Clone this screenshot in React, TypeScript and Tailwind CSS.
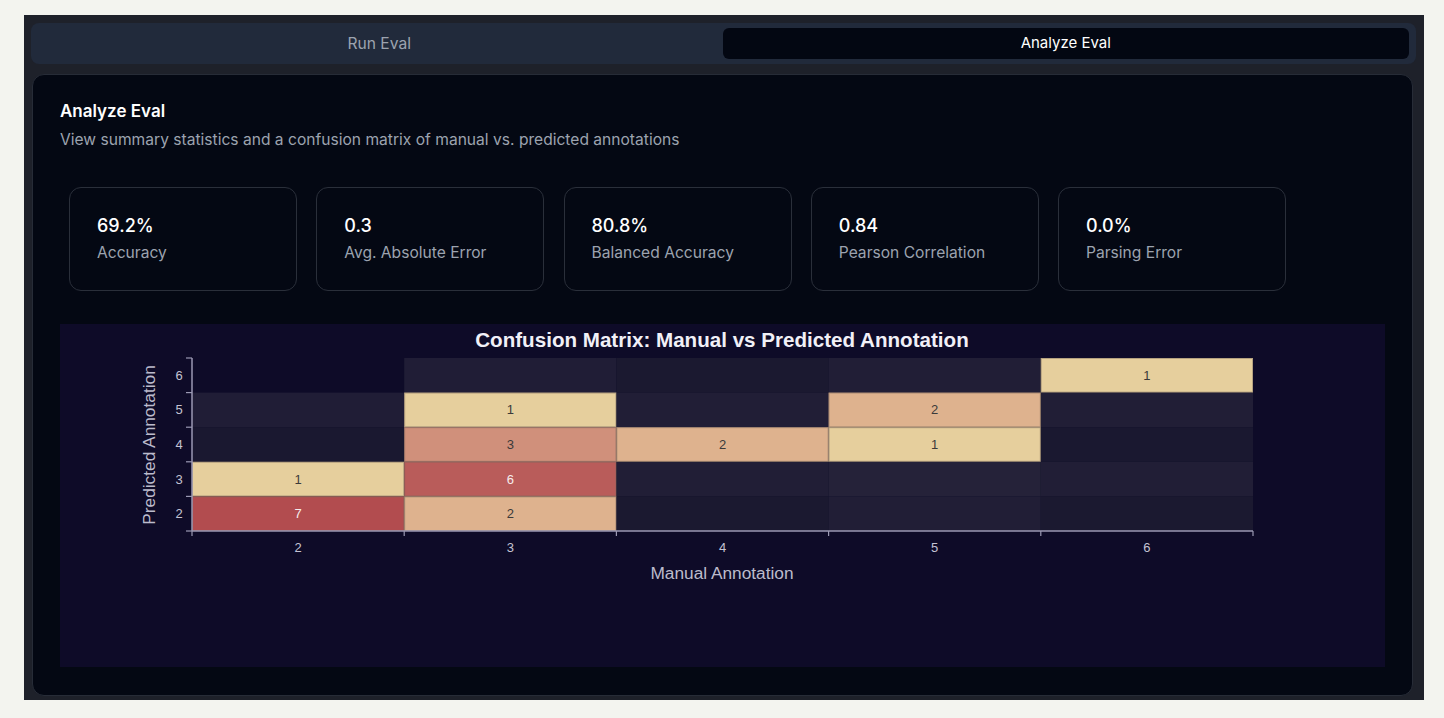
import React from "react";

type Cell = { fill: string; value?: number; light?: boolean; border?: boolean };

const COLS = [2, 3, 4, 5, 6];
const ROWS = [6, 5, 4, 3, 2];

// grid[rowIndex][colIndex], rowIndex 0 = predicted 6
const grid: (Cell | null)[][] = [
  [null, { fill: "#201d36" }, { fill: "#1b1930" }, { fill: "#211e36" }, { fill: "#e6cf9d", value: 1, border: true }],
  [{ fill: "#201d36" }, { fill: "#e6cf9d", value: 1, border: true }, { fill: "#211e36" }, { fill: "#deb28e", value: 2, border: true }, { fill: "#211e36" }],
  [{ fill: "#1a1830" }, { fill: "#d0907b", value: 3, border: true }, { fill: "#deb28e", value: 2, border: true }, { fill: "#e6cf9d", value: 1, border: true }, { fill: "#1a1830" }],
  [{ fill: "#e6cf9d", value: 1, border: true }, { fill: "#b95c5a", value: 6, light: true, border: true }, { fill: "#211e36" }, { fill: "#252239" }, { fill: "#211e36" }],
  [{ fill: "#b24c4f", value: 7, light: true, border: true }, { fill: "#deb28e", value: 2, border: true }, { fill: "#1b1930" }, { fill: "#211e36" }, { fill: "#1b1930" }],
];

function ConfusionChart() {
  const W = 1325;
  const H = 343;
  const x0 = 132;
  const x1 = 1193;
  const y0 = 34;
  const y1 = 207;
  const cw = (x1 - x0) / 5;
  const ch = (y1 - y0) / 5;
  const font = '"Liberation Sans", Arial, sans-serif';
  const axis = "#9b99b3";
  const tickText = "#c4c3d3";

  return (
    <svg width={W} height={H} viewBox={`0 0 ${W} ${H}`} className="block">
      <text x={662} y={23} textAnchor="middle" fontFamily={font} fontWeight={700} fontSize={20.6} fill="#f1f0f7">
        Confusion Matrix: Manual vs Predicted Annotation
      </text>
      {grid.map((row, ri) =>
        row.map((c, ci) =>
          c ? (
            <rect
              key={`${ri}-${ci}`}
              x={x0 + ci * cw}
              y={y0 + ri * ch}
              width={cw}
              height={ch}
              fill={c.fill}
            />
          ) : null
        )
      )}
      {grid.map((row, ri) =>
        row.map((c, ci) =>
          c && c.border ? (
            <rect
              key={`b-${ri}-${ci}`}
              x={x0 + ci * cw + 0.5}
              y={y0 + ri * ch + 0.5}
              width={cw - 1}
              height={ch - 1}
              fill="none"
              stroke="#7a6a5e"
              strokeOpacity={0.45}
              strokeWidth={1}
            />
          ) : null
        )
      )}
      {grid.map((row, ri) =>
        row.map((c, ci) =>
          c && c.value !== undefined ? (
            <text
              key={`t-${ri}-${ci}`}
              x={x0 + ci * cw + cw / 2}
              y={y0 + ri * ch + ch / 2 + 4.5}
              textAnchor="middle"
              fontFamily={font}
              fontSize={13}
              fill={c.light ? "#f5eeee" : "#3b3a3a"}
            >
              {c.value}
            </text>
          ) : null
        )
      )}
      {/* y axis */}
      <line x1={x0} y1={y0} x2={x0} y2={y1} stroke={axis} strokeWidth={1.5} />
      {[0, 1, 2, 3, 4, 5].map((i) => (
        <line key={`yt${i}`} x1={x0 - 6} y1={y0 + i * ch} x2={x0} y2={y0 + i * ch} stroke={axis} strokeWidth={1.2} />
      ))}
      {ROWS.map((r, i) => (
        <text key={`yl${r}`} x={119} y={y0 + i * ch + ch / 2 + 4.5} textAnchor="middle" fontFamily={font} fontSize={13} fill={tickText}>
          {r}
        </text>
      ))}
      {/* x axis */}
      <line x1={x0} y1={y1} x2={x1} y2={y1} stroke={axis} strokeWidth={1.5} />
      {[0, 1, 2, 3, 4, 5].map((i) => (
        <line key={`xt${i}`} x1={x0 + i * cw} y1={y1} x2={x0 + i * cw} y2={y1 + 5} stroke={axis} strokeWidth={1.2} />
      ))}
      {COLS.map((c, i) => (
        <text key={`xl${c}`} x={x0 + i * cw + cw / 2} y={228} textAnchor="middle" fontFamily={font} fontSize={13} fill={tickText}>
          {c}
        </text>
      ))}
      <text x={662} y={255} textAnchor="middle" fontFamily={font} fontSize={17.3} fill="#bcbbcc">
        Manual Annotation
      </text>
      <text
        x={0}
        y={0}
        transform={`translate(95 121) rotate(-90)`}
        textAnchor="middle"
        fontFamily={font}
        fontSize={17.3}
        fill="#bcbbcc"
      >
        Predicted Annotation
      </text>
    </svg>
  );
}

const stats = [
  { value: "69.2%", label: "Accuracy" },
  { value: "0.3", label: "Avg. Absolute Error" },
  { value: "80.8%", label: "Balanced Accuracy" },
  { value: "0.84", label: "Pearson Correlation" },
  { value: "0.0%", label: "Parsing Error" },
];

export default function App() {
  return (
    <div
      className="min-h-[718px] w-full bg-[#f3f4ef] pt-[15px] pb-[18px] pl-[24px] pr-[20px]"
      style={{ fontFamily: 'Inter, "Noto Sans", sans-serif' }}
    >
      <div className="flex h-[685px] w-[1400px] flex-col bg-[#1e212a] px-[7px] pt-[8px]">
        <div className="flex h-[41px] w-[1385px] rounded-lg bg-[#212a3b] py-[5px] pl-[5px] pr-[7px]">
          <div className="flex flex-1 items-center justify-center text-[15.6px] text-[#9ca3af]">Run Eval</div>
          <div className="flex flex-1 items-center justify-center rounded-md bg-[#030712] text-[15px] text-white">
            Analyze Eval
          </div>
        </div>
        <div className="mt-[10px] ml-[1px] flex h-[622px] w-[1381px] flex-col rounded-xl border border-[#272c37] bg-[#040813] px-[27px] pt-[24px]">
          <h2 className="text-[17px] leading-6 font-semibold text-white">Analyze Eval</h2>
          <p className="mt-[5px] text-[15.6px] leading-6 text-[#9ca3af]">
            View summary statistics and a confusion matrix of manual vs. predicted annotations
          </p>
          <div className="mt-[35px] ml-[9px] flex gap-[19.25px]">
            {stats.map((s) => (
              <div
                key={s.label}
                className="h-[104px] w-[228px] rounded-xl border border-[#2a2f3a] pt-[24px] pl-[27px]"
              >
                <div className="text-[18px] leading-7 font-medium text-white">{s.value}</div>
                <div className="text-[15.6px] leading-[26px] text-[#9ca3af]">{s.label}</div>
              </div>
            ))}
          </div>
          <div className="mt-[33px] h-[343px] w-[1325px] bg-[#0e0b28]">
            <ConfusionChart />
          </div>
        </div>
      </div>
    </div>
  );
}
